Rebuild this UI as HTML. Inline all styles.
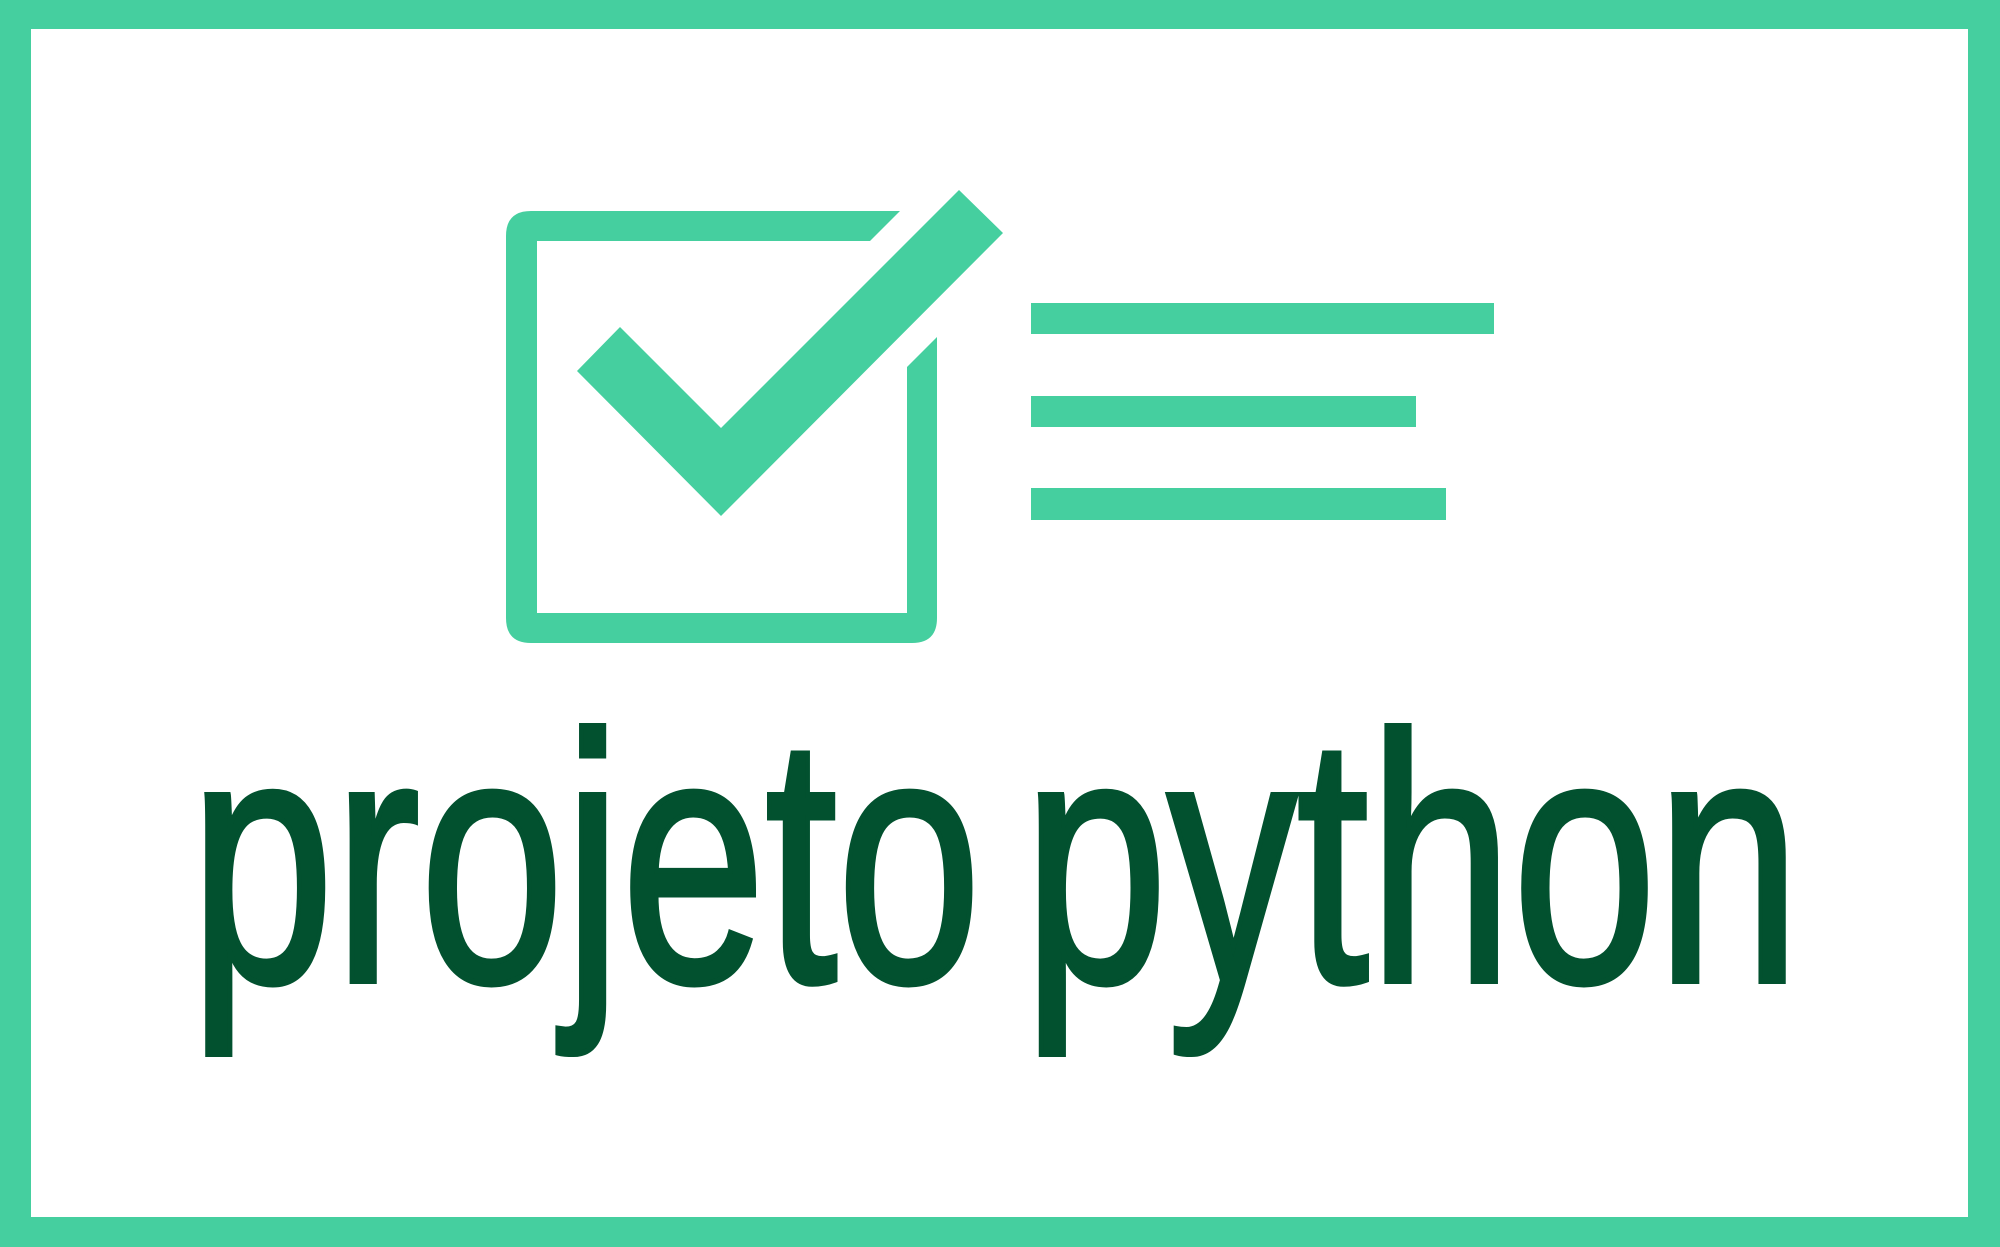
<!DOCTYPE html>
<html><head><meta charset="utf-8"><style>
html,body{margin:0;padding:0;background:#fff}
body{width:2000px;height:1247px;position:relative;overflow:hidden}
.t{position:absolute;left:190px;top:683px;font-family:"Liberation Sans",sans-serif;font-size:352px;line-height:1;color:#02512f;white-space:nowrap;transform:scaleX(0.735);transform-origin:0 0;-webkit-text-stroke:6px #02512f;word-spacing:-40px}
</style></head><body>
<svg width="2000" height="1247" style="position:absolute;left:0;top:0">
<path fill="#45cf9f" fill-rule="evenodd" d="M0 0H2000V1247H0Z M31 29V1217H1968V29Z"/>
<path fill="#45cf9f" d="M531 211H900L870 241H537V613H907V367L937 337V618Q937 643 912 643H531Q506 643 506 618V236Q506 211 531 211Z"/>
<path fill="#45cf9f" d="M577 371L620 327L721 428L959 190L1003 233L721 516Z"/>
<rect x="1031" y="303" width="463" height="31" fill="#45cf9f"/>
<rect x="1031" y="396" width="385" height="31" fill="#45cf9f"/>
<rect x="1031" y="488" width="415" height="32" fill="#45cf9f"/>
</svg>
<div class="t">projeto python</div>
</body></html>
